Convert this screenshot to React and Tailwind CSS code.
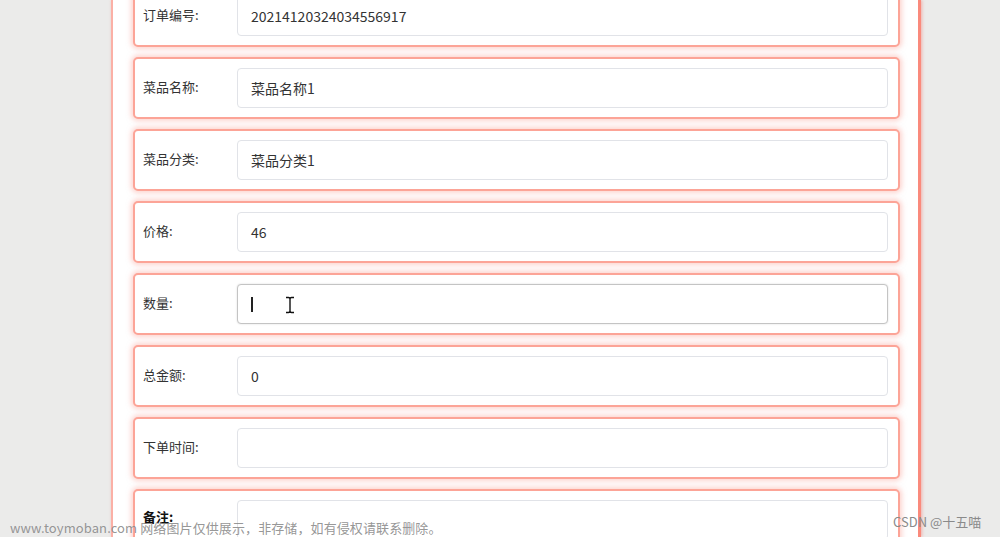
import React from "react";

const rows = [
  { label: "订单编号:", value: "20214120324034556917" },
  { label: "菜品名称:", value: "菜品名称1" },
  { label: "菜品分类:", value: "菜品分类1" },
  { label: "价格:", value: "46" },
  { label: "数量:", value: "", focus: true },
  { label: "总金额:", value: "0" },
  { label: "下单时间:", value: "" },
  { label: "备注:", value: "", dark: true },
];

function Row({ label, value, focus, dark }) {
  return (
    <div className="flex items-center h-[62px] border-2 border-[#fca497] rounded-[5px] shadow-[0_0_5px_2px_rgba(252,170,160,0.5)] bg-white pl-[8px] pr-[10px] shrink-0">
      <div className={`w-[94px] shrink-0 text-[13px] mt-[-2px] ${dark ? "text-[#111] font-bold mt-[-6px]" : "text-[#333]"}`}>{label}</div>
      <div
        className={`relative flex-1 h-[40px] rounded-[4px] bg-white flex items-center pl-[13px] text-[14px] text-[#333] ${
          focus ? "border border-[#c4c4c4] shadow-[0_0_2px_rgba(0,0,0,0.15)]" : "border border-[#e1e3e8]"
        }`}
      >
        {value}
        {focus && (
          <>
            <span className="inline-block w-[1.5px] h-[15px] bg-[#222]" />
            <svg className="absolute left-[47px] top-[11px]" width="10" height="18" viewBox="0 0 10 18">
              <path d="M1 1.5 H3.5 Q5 1.5 5 3 V15 Q5 16.5 3.5 16.5 H1 M9 1.5 H6.5 Q5 1.5 5 3 M5 15 Q5 16.5 6.5 16.5 H9" fill="none" stroke="#111" strokeWidth="1.4" />
            </svg>
          </>
        )}
      </div>
    </div>
  );
}

export default function App() {
  return (
    <div
      className="relative w-[1000px] h-[537px] overflow-hidden bg-[#ebebea] flex"
      style={{ fontFamily: '"Noto Sans CJK SC", "Liberation Sans", sans-serif' }}
    >
      <div className="w-[111px] shrink-0" />
      <div className="w-[810px] shrink-0 bg-white border-l-2 border-l-[#fbb0a6] border-r-[3px] border-r-[#fa8a7c] shadow-[1px_0_3px_rgba(250,120,110,0.5)] pl-[20px] pr-[18px]">
        <div className="flex flex-col gap-[10px] mt-[-15px]">
          {rows.map((r) => (
            <Row key={r.label} {...r} />
          ))}
        </div>
      </div>
      <div className="flex-1" />
      <div className="absolute left-[10px] top-[518px] text-[13px] text-[#8a8a8a]/90 tracking-[0.1px] whitespace-nowrap">
        www.toymoban.com 网络图片仅供展示，非存储，如有侵权请联系删除。
      </div>
      <div className="absolute left-[893px] top-[512px] text-[13px] text-[#8a8a8a] whitespace-nowrap">
        CSDN @十五喵
      </div>
    </div>
  );
}
